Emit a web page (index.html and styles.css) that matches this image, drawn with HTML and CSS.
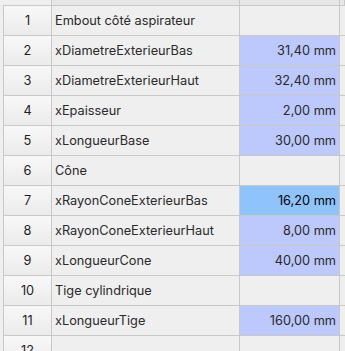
FILE: index.html
```html
<!DOCTYPE html>
<html lang="fr">
<head>
<meta charset="utf-8">
<link rel="stylesheet" href="styles.css">
</head>
<body>
<div class="sheet">
  <div class="row head">
    <div class="corner"></div><div class="ch"></div><div class="ch"></div><div class="ch"></div>
  </div>
  <div class="row"><div class="rh">1</div><div class="c">Embout côté aspirateur</div><div class="c"></div><div class="c"></div></div>
  <div class="row"><div class="rh">2</div><div class="c">xDiametreExterieurBas</div><div class="c v">31,40 mm</div><div class="c"></div></div>
  <div class="row"><div class="rh">3</div><div class="c">xDiametreExterieurHaut</div><div class="c v">32,40 mm</div><div class="c"></div></div>
  <div class="row"><div class="rh">4</div><div class="c">xEpaisseur</div><div class="c v">2,00 mm</div><div class="c"></div></div>
  <div class="row"><div class="rh">5</div><div class="c">xLongueurBase</div><div class="c v">30,00 mm</div><div class="c"></div></div>
  <div class="row"><div class="rh">6</div><div class="c">Cône</div><div class="c"></div><div class="c"></div></div>
  <div class="row"><div class="rh">7</div><div class="c">xRayonConeExterieurBas</div><div class="c v sel">16,20 mm</div><div class="c"></div></div>
  <div class="row"><div class="rh">8</div><div class="c">xRayonConeExterieurHaut</div><div class="c v">8,00 mm</div><div class="c"></div></div>
  <div class="row"><div class="rh">9</div><div class="c">xLongueurCone</div><div class="c v">40,00 mm</div><div class="c"></div></div>
  <div class="row"><div class="rh">10</div><div class="c">Tige cylindrique</div><div class="c"></div><div class="c"></div></div>
  <div class="row"><div class="rh">11</div><div class="c">xLongueurTige</div><div class="c v">160,00 mm</div><div class="c"></div></div>
  <div class="row"><div class="rh">12</div><div class="c"></div><div class="c"></div><div class="c"></div></div>
</div>
</body>
</html>
```
FILE: styles.css
```css
html, body {
  margin: 0;
  padding: 0;
  background: #efefef;
  overflow: hidden;
}
body {
  width: 345px;
  height: 351px;
  font-family: Inter, "Liberation Sans", Arial, sans-serif;
  font-size: 12.75px;
  color: #2a2a2a;
}
.sheet {
  display: flex;
  flex-direction: column;
}
.row {
  display: grid;
  grid-template-columns: 49px 188px 100px 1fr;
  padding-left: 3px;
  height: 30px;
}
.row.head {
  height: 6px;
}
.corner {
  border-bottom: 1px solid #c8c8c8;
}
.ch {
  background: #e6e6e6;
  border-right: 1px solid #c8c8c8;
  border-bottom: 1px solid #c8c8c8;
}
.ch:nth-child(2) {
  border-left: 1px solid #c8c8c8;
  margin-left: -1px;
}
.rh {
  display: flex;
  align-items: center;
  justify-content: center;
  background: linear-gradient(#f8f8f8, #ebebeb);
  border-left: 1px solid #c8c8c8;
  border-right: 1px solid #c8c8c8;
  border-bottom: 1px solid #c8c8c8;
  color: #1e1e1e;
}
.c {
  display: flex;
  align-items: center;
  padding: 0 3px;
  border-right: 1px solid #c8c8c8;
  border-bottom: 1px solid #c8c8c8;
  white-space: nowrap;
  overflow: hidden;
}
.v {
  justify-content: flex-end;
  background: #bdc8fd;
}
.v.sel {
  background: #8ec4fb;
  color: #000;
}
```
